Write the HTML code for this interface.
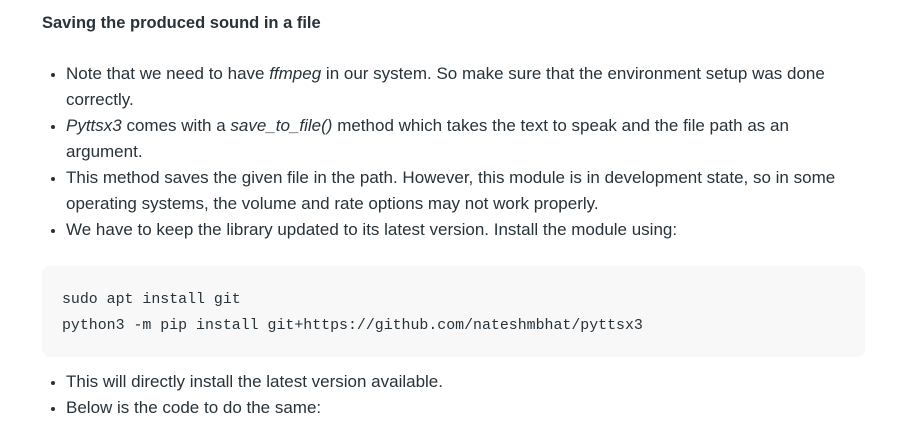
<!DOCTYPE html>
<html><head><style>
body{margin:0;background:#fff;width:912px;height:448px;overflow:hidden;font-family:"Liberation Sans",sans-serif;color:#273239;}
h3{position:absolute;left:42px;top:12px;margin:0;font-size:16.5px;font-weight:bold;line-height:22px;}
ul{position:absolute;left:42px;margin:0;padding:0 0 0 24px;width:772px;font-size:17px;line-height:26px;}
li{margin:0;padding:0;}
li::marker{font-size:13px;}
.code{position:absolute;left:42px;top:266px;width:823px;height:91px;background:#f8f8f8;border-radius:8px;font-family:"Liberation Mono",monospace;font-size:14.9px;line-height:26px;}
.code div{position:absolute;left:20px;}
</style></head><body>
<h3>Saving the produced sound in a file</h3>
<ul style="top:61px">
<li>Note that we need to have <i>ffmpeg</i> in our system. So make sure that the environment setup was done correctly.</li>
<li><i>Pyttsx3</i> comes with a <i>save_to_file()</i> method which takes the text to speak and the file path as an argument.</li>
<li>This method saves the given file in the path. However, this module is in development state, so in some operating systems, the volume and rate options may not work properly.</li>
<li>We have to keep the library updated to its latest version. Install the module using:</li>
</ul>
<div class="code"><div style="top:21px">sudo apt install git</div><div style="top:47px">python3 -m pip install git+https://github.com/nateshmbhat/pyttsx3</div></div>
<ul style="top:369px">
<li>This will directly install the latest version available.</li>
<li>Below is the code to do the same:</li>
</ul>
</body></html>
